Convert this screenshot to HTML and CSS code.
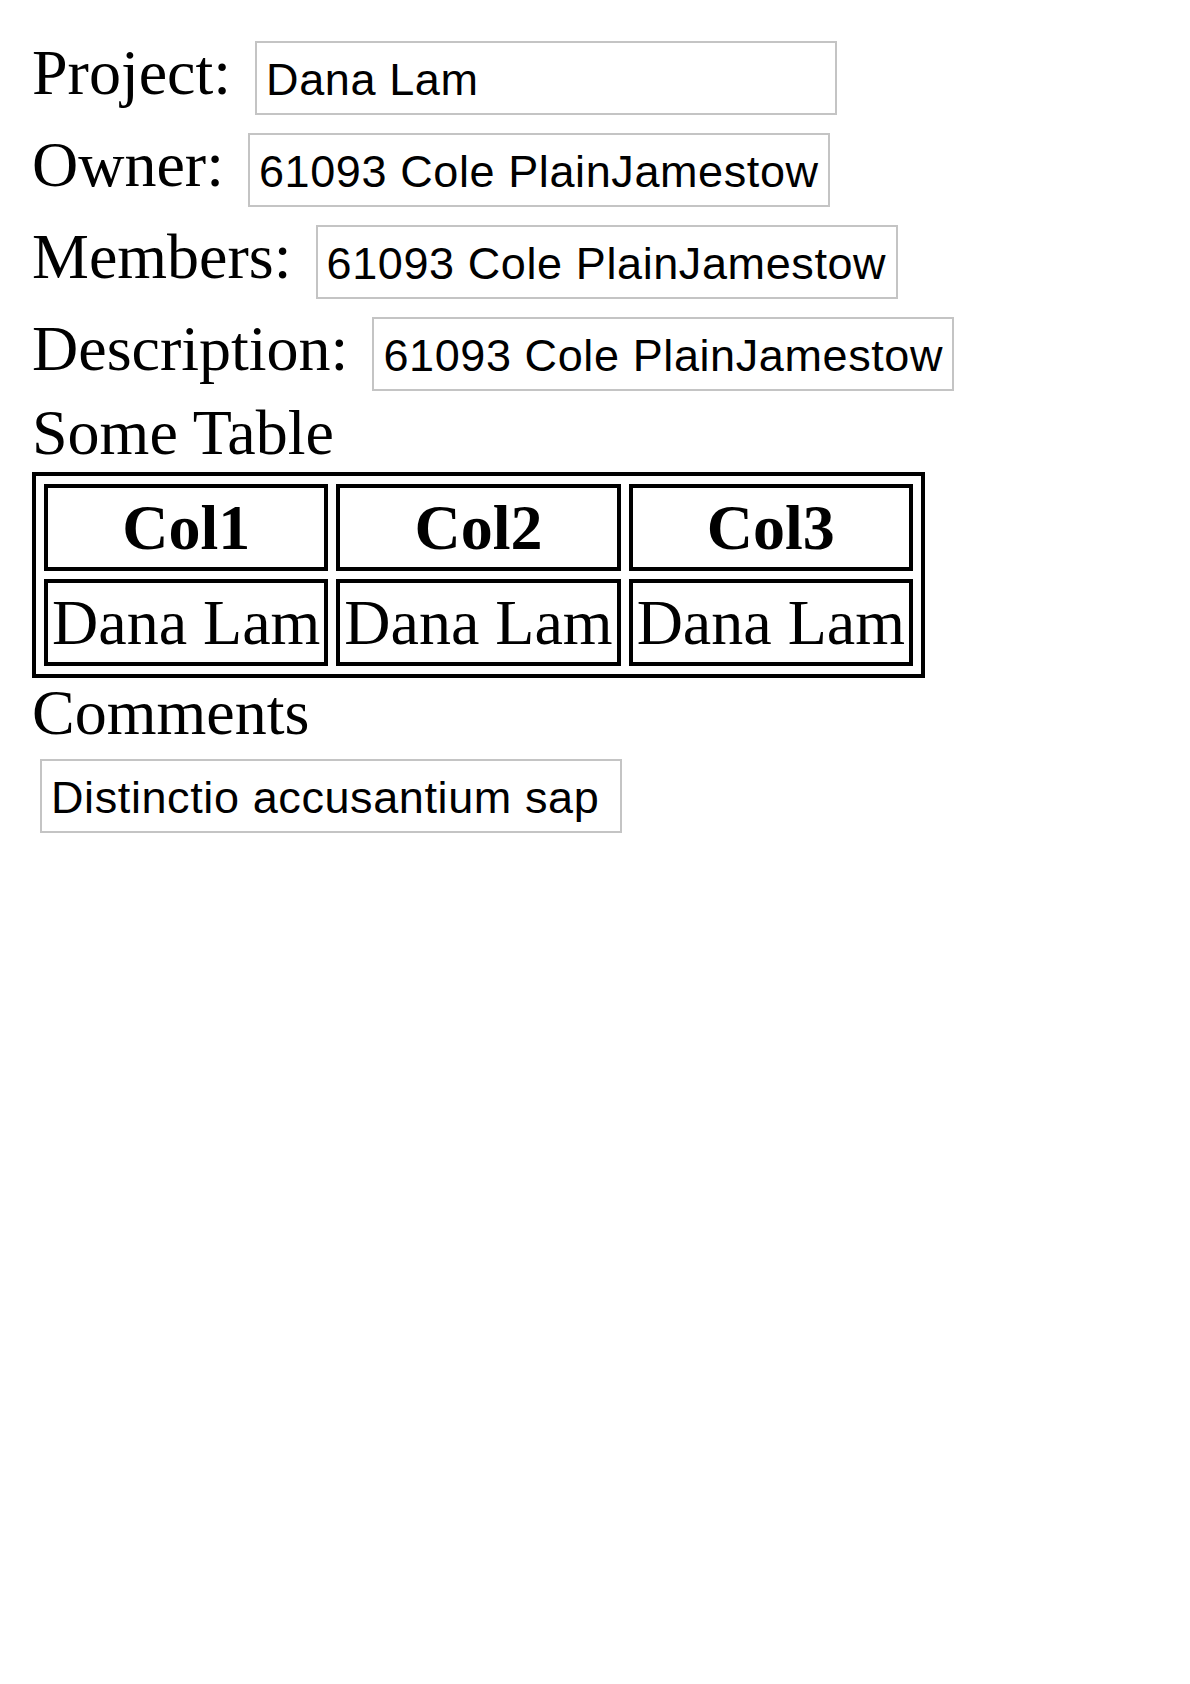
FILE: index.html
```html
<!DOCTYPE html>
<html lang="en">
<head>
<meta charset="utf-8">
<title>Project</title>
<link rel="stylesheet" href="styles.css">
</head>
<body>
<div class="page">
  <div class="field"><span class="label">Project:</span><input class="box" type="text" value="Dana Lam"></div>
  <div class="field"><span class="label">Owner:</span><input class="box" type="text" value="61093 Cole PlainJamestown"></div>
  <div class="field"><span class="label">Members:</span><input class="box" type="text" value="61093 Cole PlainJamestown"></div>
  <div class="field"><span class="label">Description:</span><input class="box" type="text" value="61093 Cole PlainJamestown"></div>
  <div class="heading">Some Table</div>
  <table class="grid">
    <tr><th>Col1</th><th>Col2</th><th>Col3</th></tr>
    <tr><td>Dana Lam</td><td>Dana Lam</td><td>Dana Lam</td></tr>
  </table>
  <div class="heading comments">Comments</div>
  <div class="field"><input class="box" type="text" value="Distinctio accusantium sap"></div>
</div>
</body>
</html>
```

FILE: styles.css
```css
html, body {
  margin: 0;
  padding: 0;
  background: #ffffff;
}

.page {
  padding: 32px;
  font-family: "Liberation Serif", "Times New Roman", serif;
  font-size: 64px;
  color: #000000;
}

.field {
  display: flex;
  align-items: flex-start;
  height: 92px;
}

.label {
  line-height: 82px;
  margin-right: 16px;
  white-space: nowrap;
}

.box {
  box-sizing: border-box;
  width: 582px;
  height: 74px;
  margin: 9px 0 0 8px;
  padding: 3px 9px 0 9px;
  border: 2px solid #c4c4c4;
  border-radius: 0;
  background: #ffffff;
  color: #000000;
  font-family: "Liberation Sans", Arial, sans-serif;
  font-size: 45px;
  letter-spacing: 0.6px;
  outline: none;
}

.heading {
  height: 72px;
  line-height: 66px;
}

.heading.comments {
  line-height: 70px;
}

.grid {
  border-collapse: separate;
  border-spacing: 8px;
  border: 4px solid #000000;
  font-size: 64px;
  line-height: 71px;
}

.grid th,
.grid td {
  border: 4px solid #000000;
  padding: 4px;
  white-space: nowrap;
}

.grid th {
  font-weight: bold;
  text-align: center;
}

.grid td {
  text-align: left;
}
```
